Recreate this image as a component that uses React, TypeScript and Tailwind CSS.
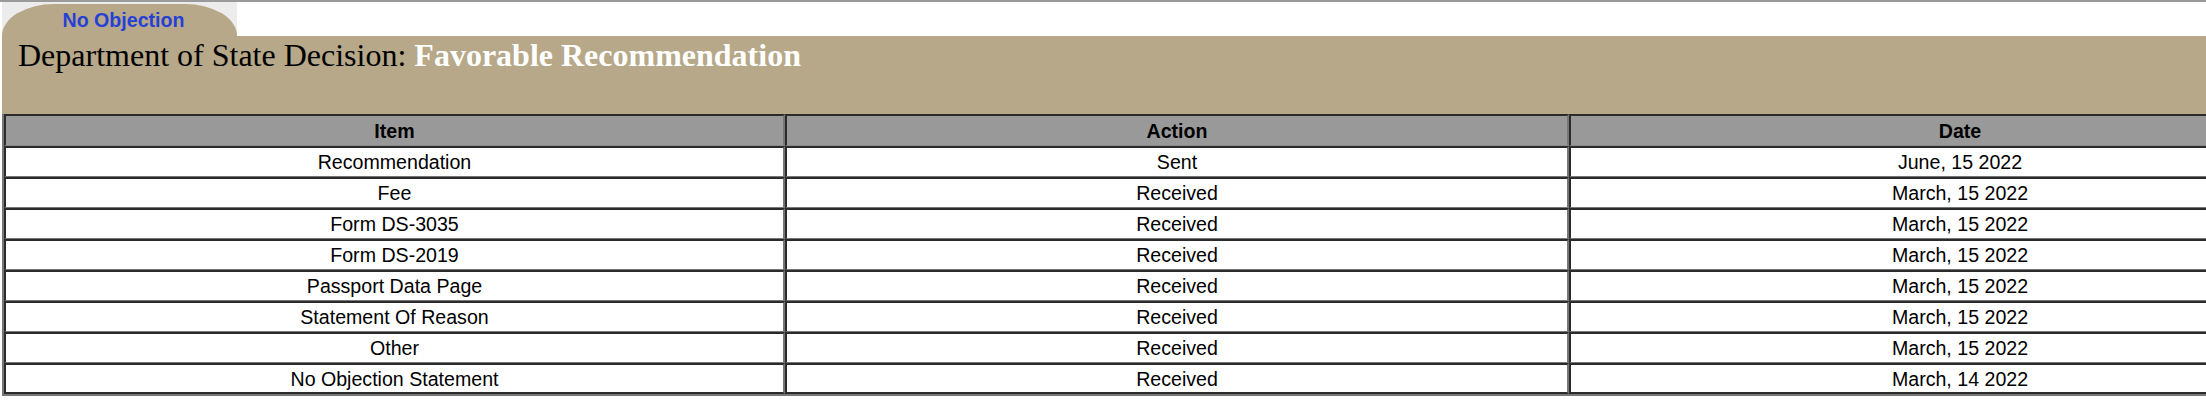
import React from "react";

const rows: [string, string, string][] = [
  ["Recommendation", "Sent", "June, 15 2022"],
  ["Fee", "Received", "March, 15 2022"],
  ["Form DS-3035", "Received", "March, 15 2022"],
  ["Form DS-2019", "Received", "March, 15 2022"],
  ["Passport Data Page", "Received", "March, 15 2022"],
  ["Statement Of Reason", "Received", "March, 15 2022"],
  ["Other", "Received", "March, 15 2022"],
  ["No Objection Statement", "Received", "March, 14 2022"],
];

function Cell({ children, header, last }: { children: React.ReactNode; header?: boolean; last?: boolean }) {
  return (
    <div
      className={
        "flex items-center justify-center border-t-2 border-l-2 border-r-2 border-t-[#2b2b2b] border-l-[#2b2b2b] border-r-[#777] text-[19.6px] leading-[22px] text-black " +
        (header ? "h-[32px] bg-[#999999] font-bold border-b border-b-[#8a8a8a] " : "h-[31px] bg-white ") +
        (last ? "border-b-2 border-b-[#2b2b2b]" : header ? "" : "border-b border-b-[#777]")
      }
    >
      {children}
    </div>
  );
}

export default function App() {
  return (
    <div className="w-full overflow-hidden bg-white" style={{ fontFamily: '"Liberation Sans", Arial, sans-serif' }}>
      <div className="h-[2px] w-full bg-[#9a9a9a]" />
      <div className="pl-[2px]">
        <div className="flex h-[34px]">
          <div className="w-[235px] h-full bg-[#ececec] pt-[2px]">
            <div className="h-full rounded-tl-[52px_32px] rounded-tr-[52px_32px] bg-[#b6a888] pt-[5px] pl-[8px] text-center text-[19.6px] font-bold leading-[22px] text-[#2640d6]">
              No Objection
            </div>
          </div>
        </div>
        <div
          className="h-[78px] bg-[#b6a888] pl-[16px] pt-[1px] text-[32px] leading-[36px] text-black"
          style={{ fontFamily: '"Liberation Serif", "Times New Roman", serif' }}
        >
          Department of State Decision: <span className="font-bold text-white">Favorable Recommendation</span>
        </div>
        <div className="w-[2349px] border-l-2 border-l-[#777] border-b-2 border-b-[#777]">
          <div className="grid grid-cols-[781px_784px_782px]">
            <Cell header>Item</Cell>
            <Cell header>Action</Cell>
            <Cell header>Date</Cell>
            {rows.map((r, i) => (
              <React.Fragment key={i}>
                <Cell last={i === rows.length - 1}>{r[0]}</Cell>
                <Cell last={i === rows.length - 1}>{r[1]}</Cell>
                <Cell last={i === rows.length - 1}>{r[2]}</Cell>
              </React.Fragment>
            ))}
          </div>
        </div>
      </div>
    </div>
  );
}
